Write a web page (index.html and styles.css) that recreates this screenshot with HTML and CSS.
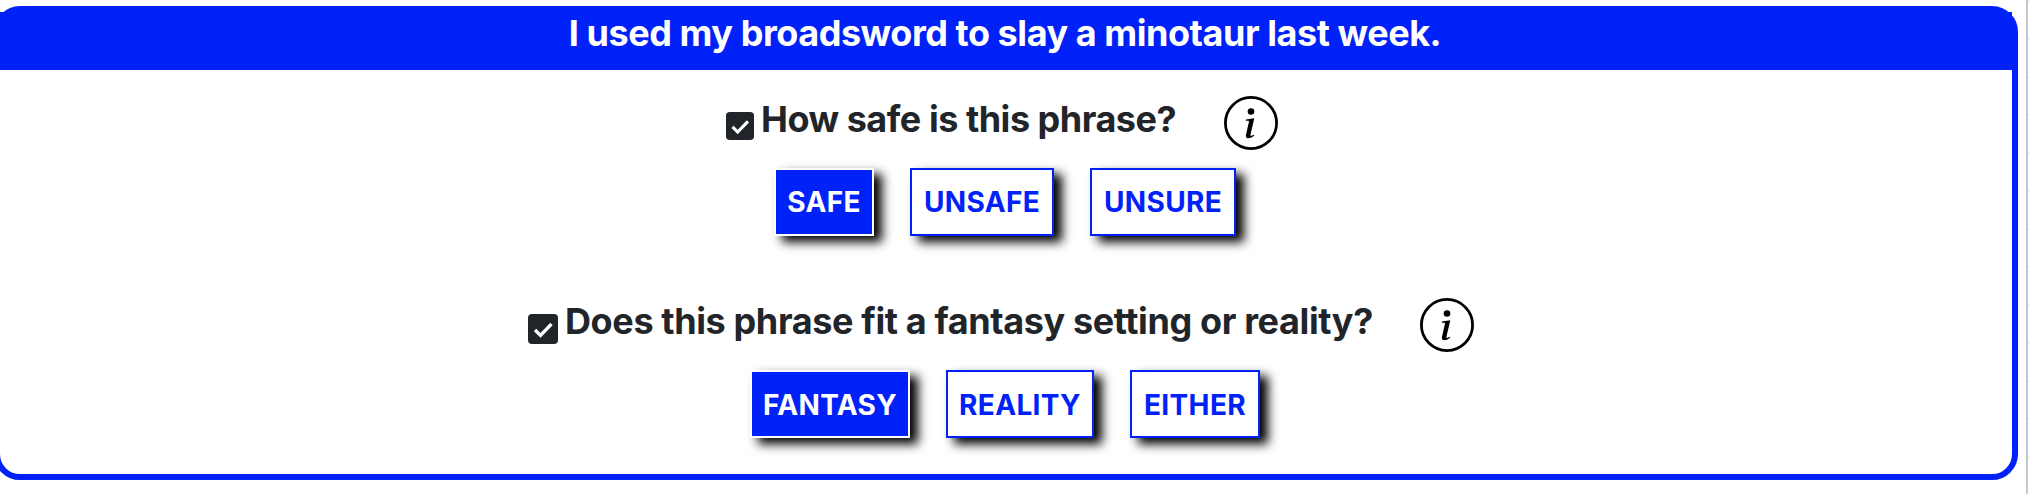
FILE: index.html
```html
<!DOCTYPE html>
<html lang="en">
<head>
<meta charset="utf-8">
<title>Phrase review</title>
<link rel="stylesheet" href="styles.css">
</head>
<body>
<main class="page">
  <section class="card">
    <h1 class="phrase"><span>I used my broadsword to slay a minotaur last week.</span></h1>
    <div class="question">
      <div class="question-row safety">
        <svg class="check" viewBox="0 0 30 30"><rect width="30" height="30" rx="4"/><path d="M7 16l5.500 5.500L23.500 10"/></svg>
        <h2 class="label">How safe is this phrase?</h2>
        <svg class="info" viewBox="0 0 54 54"><circle class="ring" cx="27" cy="27" r="25.600"/><circle cx="27" cy="15.500" r="3.300"/><path d="M22 23.500L30.300 22.300L26.500 38.500Q26.200 40.300 27.500 39.800L30 38.700L30.200 39.800Q27 42.300 24 42.300Q21.300 42 22 38.800L25 25.500Q25.200 24.700 24.200 24.700L21.800 24.700Z"/></svg>
      </div>
      <div class="options">
        <button class="option selected w-safe">SAFE</button>
        <button class="option w-unsafe">UNSAFE</button>
        <button class="option w-unsure">UNSURE</button>
      </div>
    </div>
    <div class="question">
      <div class="question-row setting">
        <svg class="check" viewBox="0 0 30 30"><rect width="30" height="30" rx="4"/><path d="M7 16l5.500 5.500L23.500 10"/></svg>
        <h2 class="label">Does this phrase fit a fantasy setting or reality?</h2>
        <svg class="info" viewBox="0 0 54 54"><circle class="ring" cx="27" cy="27" r="25.600"/><circle cx="27" cy="15.500" r="3.300"/><path d="M22 23.500L30.300 22.300L26.500 38.500Q26.200 40.300 27.500 39.800L30 38.700L30.200 39.800Q27 42.300 24 42.300Q21.300 42 22 38.800L25 25.500Q25.200 24.700 24.200 24.700L21.800 24.700Z"/></svg>
      </div>
      <div class="options">
        <button class="option selected w-fantasy">FANTASY</button>
        <button class="option w-reality">REALITY</button>
        <button class="option w-either">EITHER</button>
      </div>
    </div>
  </section>
  <aside class="rail"></aside>
</main>
</body>
</html>
```

FILE: styles.css
```css
* { box-sizing: border-box; }
body { margin: 0; background: #fff; color: #212529; font-family: Inter, "Liberation Sans", sans-serif; overflow: hidden; }
.page { display: flex; justify-content: space-between; width: 2030px; height: 494px; }
.card { width: 2024px; height: 474px; margin: 6px 0 0 -6px; border: 6px solid #0022f8; border-radius: 26px; flex: none; }
.phrase { margin: 0; height: 58px; background: #0022f8; color: #fff; font-size: 36px; line-height: 42px; font-weight: 700; letter-spacing: -0.45px; text-align: center; white-space: nowrap; padding: 0 2px 0 0; }
.question { height: 202px; padding-top: 26px; }
.question-row { display: flex; height: 54px; white-space: nowrap; }
.safety { padding-left: 726px; }
.setting { padding-left: 528px; }
.check { flex: none; width: 28px; height: 28px; margin: 16px 7px 0 0; }
.setting .check { width: 30px; height: 30px; }
.check rect { fill: #212529; }
.check path { fill: none; stroke: #fff; stroke-width: 3.300; }
.label { margin: 0; font-size: 36px; line-height: 44px; font-weight: 700; letter-spacing: -0.48px; width: 463px; padding-top: 1px; }
.setting .label { width: 855px; letter-spacing: -0.38px; }
.info { width: 54px; height: 54px; flex: none; }
.ring { fill: none; stroke: #000; stroke-width: 2.800; }
.options { display: flex; gap: 36px; padding: 18px 0 0 774px; }
.setting + .options { padding-left: 750px; }
.option { height: 68px; padding: 0; border: 2px solid #0022f8; background: #fff; color: #0022f8; font: 700 28px/64px Inter, "Liberation Sans", sans-serif; letter-spacing: 0.35px; box-shadow: 8px 6px 10px #000; white-space: nowrap; }
.setting + .options .option { padding-top: 3px; line-height: 61px; }
.selected { background: #0022f8; color: #fff; border-color: #fff; }
.w-safe { width: 100px; }
.w-unsafe { width: 144px; }
.w-unsure { width: 146px; }
.w-fantasy { width: 160px; }
.w-reality { width: 148px; }
.w-either { width: 130px; }
.rail { width: 4px; height: 494px; border-left: 2px solid #c7c6ce; background: repeating-linear-gradient(#efeff1 0 2px, #fff 2px 38px); }
```
